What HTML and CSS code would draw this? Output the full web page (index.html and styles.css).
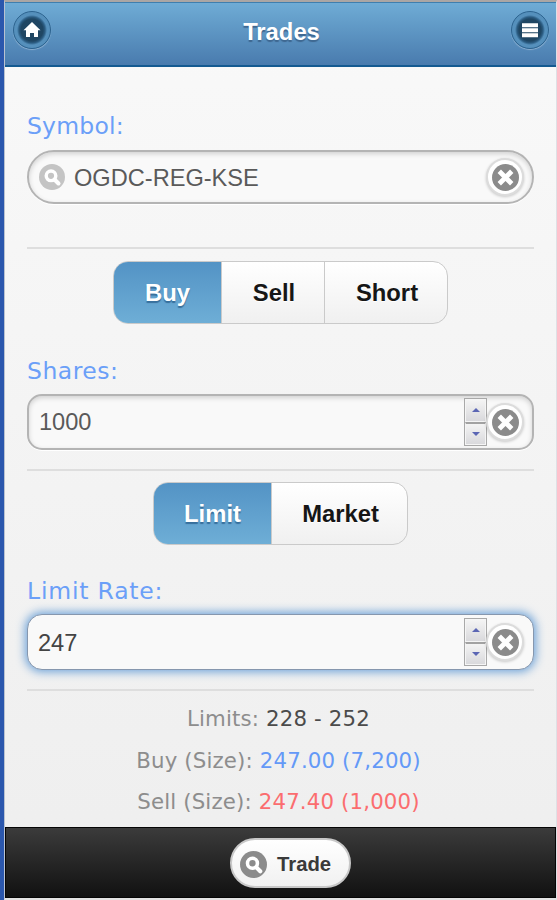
FILE: index.html
```html
<!DOCTYPE html>
<html lang="en">
<head>
    <meta charset="UTF-8">
    <meta name="viewport" content="width=device-width, initial-scale=1.0">
    <title>Trades</title>
    <link rel="stylesheet" href="styles.css">
</head>
<body>
    <!-- Shared icon shapes -->
    <svg class="icon-defs" width="0" height="0">
        <symbol id="icon-search" viewBox="0 0 26 26">
            <circle cx="13" cy="13" r="13" fill="currentColor"/>
            <circle cx="12" cy="11.8" r="4.8" fill="none" stroke="#fff" stroke-width="3.4"/>
            <path d="M15.5 15.5L19.5 19.5" stroke="#fff" stroke-width="4" stroke-linecap="round"/>
        </symbol>
        <symbol id="icon-delete" viewBox="0 0 26 26">
            <circle cx="13" cy="13" r="13" fill="currentColor"/>
            <path d="M7 7L19 19M19 7L7 19" stroke="#fff" stroke-width="4.6"/>
        </symbol>
    </svg>

    <div class="page">
        <header class="header">
            <button class="round-btn" aria-label="Home">
                <svg width="26" height="26" viewBox="0 0 26 26">
                    <path d="M13 5L21.5 13.3H19V20H15V16H11V20H7V13.3H4.5Z" fill="#fff"/>
                </svg>
            </button>
            <h1>Trades</h1>
            <button class="round-btn" aria-label="Menu">
                <svg width="26" height="26" viewBox="0 0 26 26">
                    <path d="M5 8.2H21M5 13.2H21M5 18.2H21" stroke="#fff" stroke-width="4"/>
                </svg>
            </button>
        </header>

        <main class="content">
            <!-- Symbol -->
            <label for="symbol" class="symbol-label">Symbol:</label>
            <div class="field search-field">
                <svg class="search-icon" width="26" height="26"><use href="#icon-search"/></svg>
                <input type="text" id="symbol" value="OGDC-REG-KSE">
                <button class="clear-btn" aria-label="Clear"><svg width="27" height="27"><use href="#icon-delete"/></svg></button>
            </div>
            <hr class="symbol-line">

            <div class="segmented">
                <button class="active buy">Buy</button>
                <button class="sell">Sell</button>
                <button class="short">Short</button>
            </div>

            <!-- Shares -->
            <label for="shares">Shares:</label>
            <div class="field">
                <input type="text" id="shares" value="1000">
                <div class="spinner"><span class="up"></span><span class="down"></span></div>
                <button class="clear-btn" aria-label="Clear"><svg width="27" height="27"><use href="#icon-delete"/></svg></button>
            </div>
            <hr>

            <div class="segmented order-type">
                <button class="active limit">Limit</button>
                <button class="market">Market</button>
            </div>

            <!-- Limit rate -->
            <label for="rate" class="rate-label">Limit Rate:</label>
            <div class="field focused">
                <input type="text" id="rate" value="247">
                <div class="spinner"><span class="up"></span><span class="down"></span></div>
                <button class="clear-btn" aria-label="Clear"><svg width="27" height="27"><use href="#icon-delete"/></svg></button>
            </div>
            <hr class="rate-line">

            <div class="quotes">
                <p>Limits: <span class="limits">228 - 252</span></p>
                <p>Buy (Size): <span class="bid">247.00 (7,200)</span></p>
                <p>Sell (Size): <span class="ask">247.40 (1,000)</span></p>
            </div>
        </main>

        <footer class="footer">
            <button class="trade-btn">
                <svg width="27" height="27"><use href="#icon-search"/></svg>
                Trade
            </button>
        </footer>
    </div>
</body>
</html>
```
FILE: styles.css
```css
* {
    box-sizing: border-box;
    margin: 0;
    padding: 0;
}

body {
    height: 900px;
    background-color: #2b57ad;
    padding-left: 4px;
    font-family: "Liberation Sans", Arial, sans-serif;
    overflow: hidden;
}

button {
    border: none;
    background: none;
    font-family: inherit;
    cursor: pointer;
}

svg {
    display: block;
}

.icon-defs {
    position: absolute;
}

.page {
    height: 900px;
    display: flex;
    flex-direction: column;
    border-top: 2px solid #aaa6a4;
    border-left: 1px solid #b9c2d0;
    border-right: 1px solid #dfe0e5;
    border-bottom: 2px solid #e3e3e3;
    background: linear-gradient(#f9f9f9, #eeeeee);
}

/* Header */
.header {
    height: 65px;
    display: flex;
    justify-content: space-between;
    align-items: flex-start;
    padding: 8px 7px 0 8px;
    border-top: 1px solid #3f7fae;
    border-bottom: 2px solid #145a91;
    background: linear-gradient(#6facd5, #497bae);
}

.header h1 {
    margin-top: 7px;
    padding-left: 1px;
    line-height: 28px;
    font-size: 23.8px;
    color: #fff;
    text-shadow: 0 2px 1px #3e6790;
}

.round-btn {
    width: 38px;
    height: 38px;
    display: flex;
    justify-content: center;
    align-items: center;
    border: 1.5px solid #2c638f;
    border-radius: 50%;
    background: radial-gradient(circle, #1f4663 0 11px, #2b5c82 13px, #5590bc 15px);
    box-shadow: 0 1px 1px rgba(255, 255, 255, 0.35);
}

/* Form */
.content {
    flex: 1;
    padding: 45px 22px 0;
}

label {
    display: block;
    height: 28px;
    margin-bottom: 9px;
    line-height: 28px;
    font-family: "DejaVu Sans", Verdana, sans-serif;
    font-size: 23.5px;
    letter-spacing: 0.5px;
    color: #6b9ff8;
}

.symbol-label {
    letter-spacing: 0.2px;
}

.rate-label {
    letter-spacing: 0.8px;
}

.field {
    height: 56px;
    display: flex;
    align-items: center;
    padding: 0 10px 0 10px;
    border: 2px solid #b4b4b4;
    border-radius: 15px;
    background-color: #f9f9f9;
    box-shadow: inset 0 2px 5px rgba(0, 0, 0, 0.16), 0 1px 0 #fff;
}

.field input {
    flex: 1;
    min-width: 0;
    border: none;
    outline: none;
    background: transparent;
    font-family: inherit;
    font-size: 23.6px;
    color: #5a5a5a;
}

.search-field {
    height: 54px;
    margin-top: 10px;
    border-radius: 27px;
}

.search-field input {
    padding-top: 2px;
}

.search-icon {
    margin-right: 9px;
    color: #c4c4c4;
}

.focused {
    border: 1px solid #8697ae;
    padding: 0 11px 0 10px;
    box-shadow: 0 0 10px 2px #6fa3d8;
}

.focused input {
    padding-top: 2px;
    color: #444;
}

.clear-btn {
    width: 38px;
    height: 38px;
    display: flex;
    flex: none;
    justify-content: center;
    align-items: center;
    margin-right: -2px;
    border: 2px solid #dcdcdc;
    border-radius: 50%;
    background-color: #fff;
    box-shadow: 0 1px 3px rgba(0, 0, 0, 0.2);
    color: #8b8b8b;
}

.spinner {
    width: 23px;
    height: 48px;
    display: flex;
    flex-direction: column;
    margin-right: -1px;
    border: 1px solid #a9a9a9;
}

.spinner span {
    flex: 1;
    display: flex;
    justify-content: center;
    align-items: center;
    border: 1px solid #f5f5f5;
    background: linear-gradient(#f4f4f4, #d9d9dc);
}

.spinner .down {
    border-top: 2px solid #a2a2a2;
}

.spinner span::before {
    content: "";
    border: 4px solid transparent;
}

.spinner .up::before {
    border-top: none;
    border-bottom-color: #5b66b4;
}

.spinner .down::before {
    border-bottom: none;
    border-top-color: #5b66b4;
}

hr {
    height: 2px;
    margin: 19px 0 11px;
    border: none;
    background-color: #dedede;
}

.symbol-line {
    margin-top: 43px;
    margin-bottom: 12px;
}

.rate-line {
    margin-bottom: 7px;
}

.segmented {
    width: 335px;
    height: 63px;
    display: flex;
    margin: 0 auto 33px 86px;
    border: 1px solid #cacaca;
    border-radius: 15px;
    background: linear-gradient(#fff, #f0f0f0);
    overflow: hidden;
}

.segmented button {
    font-size: 23.8px;
    font-weight: bold;
    color: #161616;
    text-shadow: 0 1px 0 #fff;
    border-left: 1px solid #cacaca;
}

.segmented .active {
    border-left: none;
    background: linear-gradient(#5393c5, #6eaed6);
    color: #fff;
    text-shadow: 0 2px 1px #376f9c;
}

.buy {
    width: 107px;
}

.sell {
    width: 103px;
    padding-left: 2px;
}

.short,
.market {
    flex: 1;
    padding-left: 2px;
}

.order-type {
    width: 255px;
    margin: 0 auto 32px 126px;
}

.limit {
    width: 117px;
}

/* Quotes */
.quotes {
    padding-right: 4px;
    text-align: center;
    font-family: "DejaVu Sans", Verdana, sans-serif;
    font-size: 21.3px;
    letter-spacing: 0.15px;
    line-height: 41.5px;
    color: #8d8d8d;
}

.limits {
    color: #4b4b4b;
}

.bid {
    color: #6499f7;
}

.ask {
    color: #fb6d6f;
}

/* Footer */
.footer {
    height: 71px;
    display: flex;
    justify-content: center;
    align-items: center;
    padding: 1px 0 0 20px;
    border: 1px solid #050505;
    background: linear-gradient(#3b3b3b, #111);
}

.trade-btn {
    width: 121px;
    height: 50px;
    display: flex;
    align-items: center;
    gap: 10px;
    padding: 2px 0 0 8px;
    border: 2px solid #c8c8c8;
    border-radius: 25px;
    background: linear-gradient(#fff, #f1f1f1);
    font-size: 20.3px;
    font-weight: bold;
    color: #3a3a3a;
}

.trade-btn svg {
    color: #8b8b8b;
}
```
